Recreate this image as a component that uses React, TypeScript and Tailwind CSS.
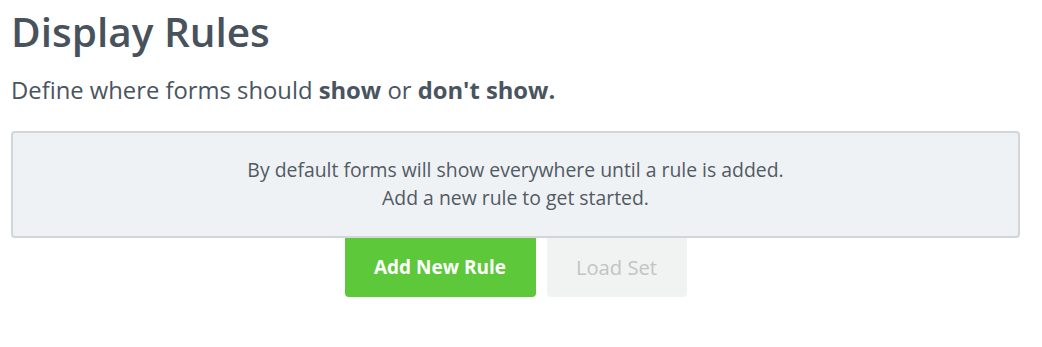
export default function App() {
  return (
    <div className="px-[11px] pt-[6px] text-[#48525c]" style={{ fontFamily: '"Open Sans", sans-serif' }}>
      <h1 className="text-[40.5px] font-semibold leading-[52px] text-[#48525c]">Display Rules</h1>
      <p className="mt-[16px] text-[23.8px] leading-[32px] text-[#4a545e]">
        Define where forms should <b className="font-bold">show</b> or <b className="font-bold">don't show.</b>
      </p>
      <div className="mt-[25px] w-[1009px] rounded-[4px] border-2 border-[#d3d6d8] bg-[#eff2f5] pt-[23px] pb-[24px] text-center text-[19.4px] leading-[28px] text-[#515a63]">
        <p>By default forms will show everywhere until a rule is added.</p>
        <p>Add a new rule to get started.</p>
      </div>
      <div className="flex w-[1009px] justify-center gap-[11px]">
        <button className="h-[59px] w-[191px] rounded-b-[4px] bg-[#5cc83a] text-[19px] font-bold text-white">
          Add New Rule
        </button>
        <button className="h-[59px] w-[140px] rounded-b-[4px] bg-[#f1f2f2] text-[20.2px] text-[#c2c4c5]">
          Load Set
        </button>
      </div>
    </div>
  );
}
